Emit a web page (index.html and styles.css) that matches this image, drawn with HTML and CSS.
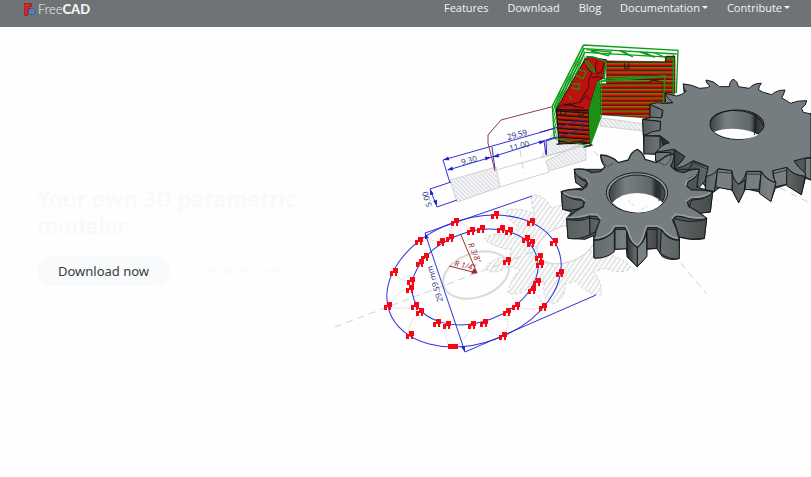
FILE: index.html
```html
<!DOCTYPE html>
<html lang="en">
<head>
<meta charset="utf-8">
<meta name="viewport" content="width=device-width, initial-scale=1">
<title>FreeCAD</title>
<link rel="stylesheet" href="styles.css">
</head>
<body>
<header class="bar">
  <a class="brand" href="#" aria-label="FreeCAD home">
    <svg class="mark" viewBox="0 0 36 39" aria-hidden="true">
      <path d="M1 1H22V11H11V16H19V23H11V37H1Z" fill="#df2428" stroke="#8d1518" stroke-width="2"/>
      <circle cx="24" cy="25" r="9" fill="#5278ba" stroke="#294b91" stroke-width="5" stroke-dasharray="4 3"/>
      <circle cx="24" cy="25" r="8" fill="#5e86c9"/><circle cx="24" cy="25" r="3" fill="#59616d"/>
    </svg>
    <span class="word">Free<b>CAD</b></span>
  </a>
  <nav class="links">
    <a href="#">Features</a>
    <a href="#">Download</a>
    <a href="#">Blog</a>
    <a class="more" href="#">Documentation</a>
    <a class="more" href="#">Contribute</a>
  </nav>
</header>
<main class="hero">
  <section class="pitch">
    <h1>Your own 3D parametric modeler</h1>
    <div class="actions">
      <a class="button" href="#">Download now</a>
      <a class="button ghost" href="#">See what's new</a>
    </div>
  </section>
  <svg class="art" viewBox="330 27 481 340" role="img" aria-label="Gears, a machined part and a dimensioned sketch">
    <defs>
      <pattern id="hatch" width="4" height="4" patternUnits="userSpaceOnUse" patternTransform="rotate(35)"><path d="M1 0V4" stroke="#cbcdce" stroke-width="1"/></pattern>
      <pattern id="hatchback" width="3" height="3" patternUnits="userSpaceOnUse" patternTransform="rotate(-45)"><path d="M1 0V3" stroke="#c5c7cd" stroke-width="1"/></pattern>
      <pattern id="layers" width="20" height="13" patternUnits="userSpaceOnUse"><path d="M0 0H20V13H0Z" fill="#dc0d08"/><path d="M0 3H20" stroke="#3a0603" stroke-width="3"/><path d="M0 7H20" stroke="#2fa80e" stroke-width="3"/></pattern>
      <pattern id="layersfront" width="20" height="13" patternUnits="userSpaceOnUse" patternTransform="skewY(4)"><path d="M0 0H20V13H0Z" fill="#cf0d08"/><path d="M0 3H20" stroke="#170604" stroke-width="4"/><path d="M0 7H20" stroke="#42810e" stroke-width="2"/></pattern>
      <pattern id="wires" width="7" height="20" patternUnits="userSpaceOnUse" patternTransform="rotate(20)"><path d="M3 0V20" stroke="#13a31b" stroke-width="4"/></pattern>
      <linearGradient id="hole"><stop stop-color="#3d4244"/><stop offset=".3" stop-color="#798082"/><stop offset=".75" stop-color="#606769"/><stop offset=".84" stop-color="#272b2c"/><stop offset="1" stop-color="#4c5152"/></linearGradient>
      <linearGradient id="side"><stop stop-color="#565c5e"/><stop offset=".5" stop-color="#798183"/><stop offset="1" stop-color="#46494a"/></linearGradient>
      <linearGradient id="dark"><stop stop-color="#292c2d"/><stop offset="1" stop-color="#70787a"/></linearGradient>
      <path id="dot" d="M-4 -1H-1V-4H4V1H3V4H1V1H-1V4H-4Z" fill="#f80611"/>
      <path id="arrow" d="M0 0L-6 -2V2Z" fill="#2020d0"/>
    </defs>

    <g stroke="#cfd1d2" fill="none">
      <path d="M335 327L540 249M520 150L524 174M594 151L613 171M665 245L707 294M780 188L808 202" stroke-dasharray="7 5"/>
      <path d="M450 180L496 167L500 187L457 202ZM546 161L586 141V160L549 171Z" fill="url(#hatchback)"/>
      <path d="M496 170L586 145M500 187L549 172"/>
      <path d="M602 118L645 124L643 131L600 126Z" fill="url(#hatchback)"/>
      <path d="M541 158C548 145 550 134 559 127L585 145Z" fill="url(#hatchback)"/>
      <path fill="url(#hatch)" stroke-dasharray="3 2" d="M484 239Q494 231 510 236L519 227Q501 216 508 210Q520 207 534 214L531 199Q536 190 546 201L552 208Q570 201 581 210L580 219Q602 229 600 241L588 250Q617 253 631 267Q624 276 605 268L594 272Q603 284 601 295Q587 295 576 281L565 284Q566 299 553 304Q540 298 545 281L531 284Q523 297 508 293Q510 280 520 270L509 266Q494 277 485 268Q496 255 509 258L512 250Q493 247 484 239Z"/>
      <ellipse cx="566" cy="244" rx="30" ry="18" transform="rotate(-20 566 244)" fill="#fefefe"/>
      <g stroke="#d9d9db"><ellipse cx="476" cy="275" rx="34" ry="22" transform="rotate(-20 476 275)" stroke-width="2"/>
      <path d="M394 274Q400 281 412 282M389 306Q397 291 412 287M390 307Q404 310 416 306M408 334Q409 321 420 311M449 346Q444 336 447 325M453 347Q465 341 472 326M420 241Q431 239 441 242M455 222Q447 233 450 238M457 222Q470 225 471 231M483 323Q489 335 503 336Q510 327 507 312M516 306Q529 312 543 307Q542 298 532 290M540 264Q548 259 560 273M531 222Q520 228 526 239" stroke-dasharray="2 1"/></g>
    </g>
    <g fill="none" stroke="#3033d8" stroke-width="1">
      <ellipse cx="474" cy="281" rx="90" ry="62" transform="rotate(-20 474 281)"/>
      <ellipse cx="475" cy="277" rx="65" ry="45" transform="rotate(-20 475 277)"/>
      <path d="M425 233L532 196M425 233L465 352L596 295M443 160L584 120V142M443 160L450 183M448 170L492 157M492 157L584 128M492 147L495 169M544 141L546 155M430 189L451 182M430 189L437 207L457 200"/>
    </g>
    <use href="#arrow" transform="translate(425 233) rotate(-109)"/><use href="#arrow" transform="translate(465 352) rotate(71)"/>
    <use href="#arrow" transform="translate(443 160) rotate(164)"/><use href="#arrow" transform="translate(447 170) rotate(164)"/><use href="#arrow" transform="translate(491 157) rotate(-16)"/><use href="#arrow" transform="translate(493 157) rotate(164)"/><use href="#arrow" transform="translate(545 141) rotate(-16)"/><use href="#arrow" transform="translate(430 189) rotate(-109)"/><use href="#arrow" transform="translate(437 206) rotate(71)"/>
    <path d="M555 106L501 120L488 135V143L495 171" fill="none" stroke="#963b43"/>
    <path d="M461 235L477 273L449 266" fill="none" stroke="#a02b30"/><path d="M477 273L471 274L474 268Z" fill="#a51e25"/>
    <g class="dims">
      <text transform="translate(508 140) rotate(-15)">29.59</text><text transform="translate(510 151) rotate(-14)">11.00</text><text transform="translate(462 165) rotate(-14)">9.30</text><text transform="translate(432 206) rotate(-107)">5.00</text><text transform="translate(443 301) rotate(-107)">29.59 mm</text>
      <text class="radius" transform="translate(468 244) rotate(68)">R 3/8"</text><text class="radius" transform="translate(454 266) rotate(12)">R 1/4"</text>
    </g>
    <g>
      <use href="#dot" x="455" y="222"/><use href="#dot" x="471" y="231"/><use href="#dot" x="481" y="229"/><use href="#dot" x="450" y="238"/><use href="#dot" x="441" y="242"/><use href="#dot" x="419" y="241"/><use href="#dot" x="425" y="257"/><use href="#dot" x="420" y="263"/><use href="#dot" x="394" y="272"/><use href="#dot" x="411" y="281"/><use href="#dot" x="410" y="289"/><use href="#dot" x="388" y="306"/><use href="#dot" x="415" y="306"/><use href="#dot" x="420" y="312"/><use href="#dot" x="410" y="335"/><use href="#dot" x="437" y="323"/><use href="#dot" x="447" y="325"/><use href="#dot" x="472" y="325"/><path d="M448 344H458V349H448Z" fill="#f80611"/>
      <use href="#dot" x="495" y="215"/><use href="#dot" x="531" y="222"/><use href="#dot" x="501" y="229"/><use href="#dot" x="509" y="231"/><use href="#dot" x="526" y="239"/><use href="#dot" x="531" y="243"/><use href="#dot" x="554" y="242"/><use href="#dot" x="539" y="257"/><use href="#dot" x="540" y="264"/><use href="#dot" x="507" y="261"/><use href="#dot" x="560" y="273"/><use href="#dot" x="537" y="282"/><use href="#dot" x="532" y="290"/><use href="#dot" x="543" y="307"/><use href="#dot" x="516" y="306"/><use href="#dot" x="507" y="312"/><use href="#dot" x="503" y="336"/><use href="#dot" x="484" y="323"/>
    </g>

    <g transform="translate(540 35) scale(.3333)">
      <path d="M130 30L37 213L45 310L150 334L184 242L180 135L200 80L410 82L414 46Z" fill="#fefefe"/>
      <path d="M130 30L37 213L40 300L50 320V225L137 72Z" fill="url(#wires)"/>
      <path d="M200 78L375 80L378 64L405 65V175L370 205H200Z" fill="url(#layers)" stroke="#381006" stroke-width="2"/>
      <path d="M137 70L152 66L200 75L189 130L172 139L145 226L48 224Z" fill="#bf100d" stroke="#25100c" stroke-width="3"/>
      <path d="M176 147L325 142L334 135L364 140L372 180V210H330V249L180 239Z" fill="url(#layers)" stroke="#36180b" stroke-width="2"/>
      <path d="M49 224L146 227L151 325L57 326Z" fill="url(#layersfront)" stroke="#0d1609" stroke-width="4"/>
      <path d="M172 137L146 226L150 332L180 250V139Z" fill="#2c740c"/><path d="M172 137L146 226L150 332L180 250V139Z" fill="url(#wires)"/>
      <g fill="none" stroke="#0b9d18" stroke-width="4">
        <path d="M130 30L414 46L409 174M130 30L37 213L43 310L150 333L184 242V138L375 122L370 208M130 41L410 57M133 52L401 67M138 64L160 66L198 80L191 132"/>
        <path d="M140 44L213 51L205 62L153 48M240 48L279 66L248 48M300 51L345 67L313 52M345 54L390 73"/>
        <path d="M132 42L43 215M134 54L46 220M143 77L169 112L150 102L135 75M116 103L138 111L129 131L106 120ZM98 145L119 147L117 164L94 158M87 181L95 195M179 139L376 125M198 81L193 132L357 125M400 60V178"/>
      </g>
      <path d="M138 94L156 115Q140 141 148 151L119 202L72 213M80 208Q98 202 106 219M119 203L140 181L150 195M172 77Q160 101 171 117L184 111L193 83M155 130Q171 119 188 132M254 85V100H266V85M328 144L338 136L357 139M378 80V64H405M48 224L70 207L132 219M62 226V241H77V227M116 227V240H131V229" fill="none" stroke="#251712" stroke-width="3"/>
      <path d="M0 292L128 255M128 255V282L18 318L20 360" fill="none" stroke="#3022a8" stroke-width="3"/>
      <path d="M49 328L130 318L155 330L130 337" fill="none" stroke="#38202f" stroke-width="4"/>
    </g>

    <g transform="translate(630 70) scale(.3333)" stroke="#171a1b" stroke-width="3" stroke-linejoin="round">
      <path d="M38 148L40 190 42 250 78 253 76 273 120 283 130 299 205 320 226 350V363L250 367 270 352 306 360 326 398 346 356 389 366 422 394 436 355 470 344 514 374 526 325 543 330V130L430 200 180 200 60 103 60 145Z" fill="#535a5c"/>
      <path d="M60 103L97 120 95 144H60ZM38 148L91 154V181L40 196ZM42 197L90 199V238L73 252H42ZM76 247L122 248 120 284 77 273ZM105 70L137 82 129 99H107ZM160 42L193 51 162 65Z" fill="url(#side)"/>
      <path d="M92 199L119 218 99 224ZM133 239L166 260 143 286 133 299ZM190 274L235 291 225 333 205 355 178 296ZM228 319L263 296 253 364 226 361Z" fill="url(#dark)"/>
      <path d="M263 297L310 302 306 360 257 351ZM350 305H394L387 358 345 359ZM428 301L472 291 470 343 437 350ZM526 265L543 264V330L525 320Z" fill="#777f81"/>
      <path d="M306 302Q310 331 327 343L346 330 342 366 326 398 307 362ZM394 305Q407 331 438 338L423 395 388 370ZM471 292Q490 316 526 319L514 374 470 347Z" fill="url(#side)"/>
      <path d="M105 70L140 78 155 73 168 64Q160 57 160 42 185 43 208 55L232 53 240 48Q227 40 228 30 251 31 268 50L298 50Q300 32 309 28 322 32 325 50L358 55Q370 39 394 40 385 51 386 60L400 67 425 74Q440 60 465 60 460 77 455 84L470 92 482 100Q501 91 530 92 529 106 515 115L520 127 543 132V262L525 264 492 273Q503 292 526 309L526 319Q489 316 471 292L428 302Q427 322 438 338 410 330 394 304H350Q347 323 327 343 308 329 306 302L265 296Q250 317 228 319L235 290 190 272Q161 293 130 297 154 279 165 260L133 238 80 246Q91 225 118 218L90 197 42 197Q67 182 91 181L92 154 38 148Q66 137 95 144L99 121 60 103Q80 94 106 101L129 98Q112 86 105 70Z" fill="#757d80"/>
      <path d="M265 306L306 310M352 312L394 313M432 310L472 300M191 280L233 298" fill="none" stroke="#313638" stroke-width="3"/>
      <ellipse cx="321" cy="164" rx="81" ry="44" fill="url(#hole)"/>
      <path d="M252 186Q281 174 321 177 363 181 385 194 360 208 324 207 280 206 252 186Z" fill="#fefefe" stroke="none"/>
      <path d="M240 156Q244 127 306 121 382 119 402 170M376 137L374 195" fill="none"/>
    </g>

    <g transform="translate(550 140) scale(.3333)" stroke="#171a1b" stroke-width="3" stroke-linejoin="round">
      <path d="M73 88L77 127 100 143 34 155 38 208 65 216 50 235 54 295 105 298 131 287 132 354Q170 357 195 328L229 326 232 351 262 380 289 351 291 328 320 325 337 350Q360 363 387 356L389 292Q431 303 463 296L470 235 446 220 481 216 488 155 440 141 448 88Z" fill="#4f5658"/>
      <path d="M50 238Q95 247 120 232V284Q86 301 54 295ZM132 301Q174 301 193 267V335Q168 357 132 354ZM334 270Q353 302 388 301V356Q357 360 331 340ZM370 235Q420 252 470 238L463 295Q423 302 388 291ZM34 156Q64 183 100 181V198Q75 216 38 208ZM425 180Q468 180 488 156L481 216 446 220 418 201ZM73 88Q80 116 112 127L100 143 77 127Z" fill="url(#side)"/>
      <path d="M195 268H231V326L195 328ZM291 268H321V326H291ZM119 234L150 240 136 275 120 284Z" fill="url(#side)"/>
      <path d="M230 278Q238 310 262 321V380L232 351Z" fill="url(#dark)"/><path d="M262 321Q283 309 289 277L291 349 262 380Z" fill="#798184"/>
      <path d="M262 28Q280 38 285 58L318 68 335 58Q350 43 372 42 371 66 362 78L378 92 400 98Q421 86 448 88 444 112 415 124L410 138 425 150Q460 149 488 155 470 177 425 176L412 184 416 199Q443 212 470 235 429 243 395 230L378 228 367 238Q382 268 388 300 353 297 335 269L320 263 292 263 287 278Q281 310 262 322 237 307 232 276L225 263H195L187 278Q163 299 132 300 137 268 150 240L140 229 118 228Q88 240 50 235 73 213 100 200L104 184 91 177Q51 176 34 155 69 144 95 150L110 139 113 126 106 120Q79 111 73 88 107 84 125 98L150 95 165 80Q152 65 152 45 185 46 205 68L235 60Q244 34 262 28Z" fill="#757d80" stroke="#202425" stroke-width="4"/>
      <path d="M50 232Q88 235 118 223L142 224 153 238M134 295Q161 294 184 274L193 258H227L236 275Q241 302 262 316 277 304 283 276L290 258H322L338 266Q356 292 384 295M364 238L376 223 397 225Q429 238 464 232M408 184L424 172Q465 173 482 157M406 138L411 121Q440 108 443 91M40 157Q54 172 93 173L107 183M78 92Q84 108 110 117L117 128" fill="none" stroke="#949d9f" stroke-width="5"/>
      <path d="M153 49Q157 68 173 80L190 70M78 92Q88 110 110 119M364 46Q361 69 344 76L326 67M444 92Q436 109 411 118" fill="none" stroke="#303537" stroke-width="2"/>
      <ellipse cx="261" cy="158" rx="92" ry="60" fill="#8c9597"/>
      <ellipse cx="261" cy="161" rx="84" ry="56" fill="url(#hole)"/>
      <path d="M187 188Q213 160 260 159 314 161 338 188 313 218 263 218 212 216 187 188Z" fill="#fefefe" stroke="none"/>
      <path d="M329 126L327 183" stroke="#242829"/><path d="M235 182L253 199M275 208L290 199" stroke="#c8cccd" stroke-dasharray="8 5"/>
    </g>
  </svg>
</main>
</body>
</html>
```
FILE: styles.css
```css
* { box-sizing: border-box; }
body {
  margin: 0;
  background: #fefefe;
  color: #343a3d;
  font-family: "Noto Sans", sans-serif;
}
a { color: inherit; text-decoration: none; }
.bar {
  display: flex;
  justify-content: space-between;
  align-items: flex-start;
  padding: 0 21px 10px 24px;
  background: #6f7375;
  color: #f3f4f4;
}
.brand { display: flex; align-items: center; gap: 2px; padding-top: 2px; }
.mark { width: 12px; height: 13px; }
.word { font: 300 13px/15px Lato, sans-serif; }
.word b { font-weight: 900; }
.links { display: flex; gap: 19px; font: 11px/16px "Open Sans", sans-serif; }
.more::after {
  content: "";
  display: inline-block;
  margin-left: 2px;
  vertical-align: 3px;
  border: 3px solid transparent;
  border-top-color: currentColor;
  border-bottom: 0;
}
.hero {
  display: grid;
  grid-template-columns: 330fr 481fr;
  align-items: start;
}
.pitch { padding: 158px 24px 0 37px; }
h1 {
  margin: 0 0 17px;
  color: #f8f9f9;
  font-size: 22px;
  font-weight: 600;
  line-height: 27px;
}
.actions { display: flex; gap: 6px; }
.button {
  padding: 0 21px;
  border-radius: 15px;
  background: #f8fafb;
  font-size: 13px;
  line-height: 30px;
  white-space: nowrap;
}
.ghost { background: none; color: #fafbfb; font-size: 12px; }
.art { display: block; width: 100%; height: auto; }
.dims {
  fill: #272784;
  font: 8px "Open Sans", sans-serif;
}
.radius { fill: #8e2931; font-style: italic; }
```
